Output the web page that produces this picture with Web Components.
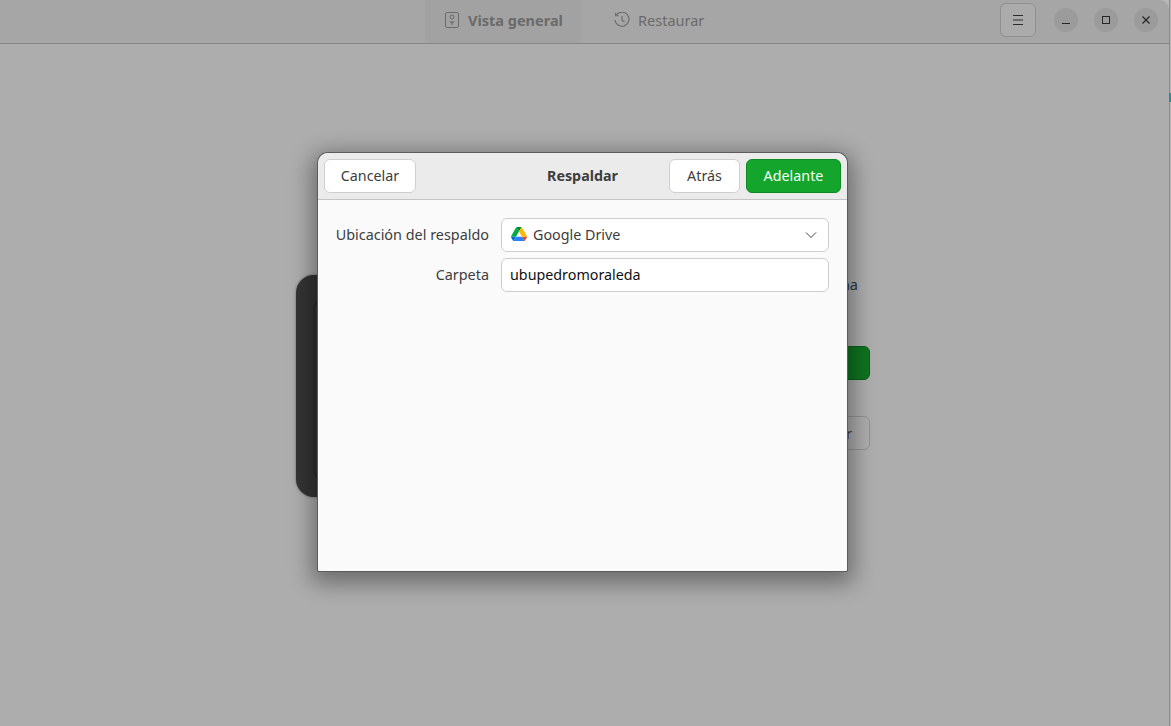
<!DOCTYPE html>
<html lang="es">
<head>
<meta charset="utf-8">
<title>Respaldar</title>
<style>
    html, body { margin: 0; height: 100%; overflow: hidden; background: #b8b8b8; }
    body { display: flex; font-family: "Noto Sans", "Open Sans", sans-serif; font-size: 14.3px; }
</style>
</head>
<body>
<app-window>
    <header-bar slot="header"></header-bar>
    <backup-overview slot="content"></backup-overview>
    <backup-dialog slot="dialog"></backup-dialog>
</app-window>
<desktop-edge></desktop-edge>

<script>
const ICONS = {
    overview: /*html*/`<svg width="16" height="16" viewBox="0 0 16 16" fill="none" stroke="currentColor" stroke-width="1"><rect x="1.5" y=".5" width="13" height="15" rx="1.5"/><circle cx="8" cy="5" r="2"/><path d="M8 8.5v4.5M5.5 9.5 8 11l2.5-1.5"/></svg>`,
    history: /*html*/`<svg width="16" height="16" viewBox="0 0 16 16" fill="none" stroke="currentColor" stroke-width="1.1"><path d="M2.2 3.2A7 7 0 1 1 1 8"/><path d="M1.6 .8v3h3"/><path d="M8 4v4.3l2.6 1.7"/></svg>`,
    menu: /*html*/`<svg width="16" height="16" viewBox="0 0 16 16" fill="none" stroke="currentColor" stroke-width="1"><path d="M3 3.5h10M3 8h10M3 12.5h10"/></svg>`,
    minimize: /*html*/`<svg width="16" height="16" viewBox="0 0 16 16" fill="none" stroke="currentColor" stroke-width="1"><path d="M4 11.5h8"/></svg>`,
    maximize: /*html*/`<svg width="16" height="16" viewBox="0 0 16 16" fill="none" stroke="currentColor" stroke-width="1"><rect x="4.5" y="4.5" width="7" height="7"/></svg>`,
    close: /*html*/`<svg width="16" height="16" viewBox="0 0 16 16" fill="none" stroke="currentColor" stroke-width="1.2"><path d="m4.5 4.5 7 7M11.5 4.5l-7 7"/></svg>`,
    chevron: /*html*/`<svg width="16" height="16" viewBox="0 0 16 16" fill="none" stroke="#3d3d3d" stroke-width="1"><path d="M3 6.5l5 5 5-5"/></svg>`,
    drive: /*html*/`<svg width="16" height="14.3" viewBox="0 0 87.3 78"><path d="m6.6 66.85 3.85 6.65c.8 1.4 1.95 2.5 3.3 3.3l13.75-23.8h-27.5c0 1.55.4 3.1 1.2 4.5z" fill="#0066da"/><path d="m43.65 25-13.75-23.8c-1.35.8-2.5 1.9-3.3 3.3l-25.4 44a9.06 9.06 0 0 0-1.2 4.5h27.5z" fill="#00ac47"/><path d="m73.55 76.8c1.35-.8 2.5-1.9 3.3-3.3l1.6-2.75 7.65-13.25c.8-1.4 1.2-2.95 1.2-4.5h-27.5l5.85 11.5z" fill="#ea4335"/><path d="m43.65 25 13.75-23.8c-1.35-.8-2.9-1.2-4.5-1.2h-18.5c-1.6 0-3.15.45-4.5 1.2z" fill="#00832d"/><path d="m59.8 53h-32.3l-13.75 23.8c1.35.8 2.9 1.2 4.5 1.2h50.8c1.6 0 3.15-.45 4.5-1.2z" fill="#2684fc"/><path d="m73.4 26.5-12.7-22c-.8-1.4-1.95-2.5-3.3-3.3l-13.75 23.8 16.15 28h27.45c0-1.55-.4-3.1-1.2-4.5z" fill="#ffba00"/></svg>`,
}

class AppWindow extends HTMLElement {
    constructor() {
        super()
        this.attachShadow({ mode: 'open' })
        this.shadowRoot.innerHTML = /*html*/`
            <style>
                :host {
                    display: flex;
                    flex-direction: column;
                    flex: none;
                    position: relative;
                    width: 1169px;
                    height: 726px;
                    background: #adadad;
                    border-radius: 0 10px 0 0;
                    overflow: hidden;
                    color: #2e2e2e;
                }
                .body { flex: 1; min-height: 0; display: flex; }
            </style>
            <slot name="header"></slot>
            <div class="body"><slot name="content"></slot></div>
            <slot name="dialog"></slot>
        `
    }
}

// the two pixels of desktop that show to the right of the window
class DesktopEdge extends HTMLElement {
    constructor() {
        super()
        this.attachShadow({ mode: 'open' })
        this.shadowRoot.innerHTML = /*html*/`
            <style>
                :host {
                    display: block;
                    flex: 1;
                    box-sizing: border-box;
                    border-left: 1px solid #8c8c8c;
                    padding-top: 93px;
                }
                .mark { height: 9px; margin-left: -1px; background: #1f8f9c; }
            </style>
            <div class="mark"></div>
        `
    }
}

class HeaderBar extends HTMLElement {
    constructor() {
        super()
        this.attachShadow({ mode: 'open' })
        this.shadowRoot.innerHTML = /*html*/`
            <style>
                :host {
                    display: flex;
                    height: 43px;
                    flex: none;
                    align-items: stretch;
                    background: #a6a6a6;
                    border-bottom: 1px solid #868686;
                }
                .tabs { display: flex; margin-left: 425px; }
                .tab {
                    display: flex;
                    align-items: center;
                    gap: 8px;
                    width: 157px;
                    box-sizing: border-box;
                    padding: 0 0 4px 19px;
                    color: #6a6a6a;
                    font-size: 14.5px;
                }
                .tab.active { background: #a2a2a2; font-weight: 700; }
                .tab.plain { padding-left: 32px; }
                .tools { margin-left: auto; display: flex; align-items: center; gap: 16px; padding: 0 11px 3px 0; }
                .menu {
                    width: 36px;
                    height: 34px;
                    box-sizing: border-box;
                    display: grid;
                    place-items: center;
                    background: #ababab;
                    border: 1px solid #8f8f8f;
                    border-radius: 6px;
                    margin-right: 2px;
                    color: #2b2b2b;
                }
                .ctl {
                    width: 24px;
                    height: 24px;
                    display: grid;
                    place-items: center;
                    background: #9b9b9b;
                    border-radius: 50%;
                    color: #262626;
                }
            </style>
            <div class="tabs">
                <div class="tab active">${ICONS.overview}<span>Vista general</span></div>
                <div class="tab plain">${ICONS.history}<span>Restaurar</span></div>
            </div>
            <div class="tools">
                <div class="menu">${ICONS.menu}</div>
                <div class="ctl">${ICONS.minimize}</div>
                <div class="ctl">${ICONS.maximize}</div>
                <div class="ctl">${ICONS.close}</div>
            </div>
        `
    }
}

class BackupOverview extends HTMLElement {
    constructor() {
        super()
        this.attachShadow({ mode: 'open' })
        this.shadowRoot.innerHTML = /*html*/`
            <style>
                :host {
                    display: flex;
                    flex: 1;
                    justify-content: center;
                    padding: 231px 3px 0 0;
                    align-items: flex-start;
                    gap: 40px;
                }
                .phone {
                    width: 200px;
                    height: 222px;
                    box-sizing: border-box;
                    background: #343434;
                    border-radius: 18px;
                    padding: 22px 0 20px 17px;
                    box-shadow: 0 0 3px #666;
                }
                .screen { height: 100%; border: 2px solid #2b2b2b; border-radius: 12px; }
                .side { width: 334px; display: flex; flex-direction: column; align-items: stretch; font-size: 14.5px; color: #26343f; }
                .text { height: 71px; padding-right: 12px; line-height: 18px; text-align: right; }
                .primary { height: 34px; box-sizing: border-box; border: 1px solid #0a5f16; border-radius: 6px; background: #0e7420; }
                .secondary {
                    height: 34px;
                    margin-top: 36px;
                    box-sizing: border-box;
                    border: 1px solid #929292;
                    border-radius: 6px;
                    text-align: right;
                    padding-right: 17px;
                    line-height: 32px;
                    color: #4a3a30;
                }
            </style>
            <div class="phone"><div class="screen"></div></div>
            <div class="side">
                <div class="text">na</div>
                <div class="primary"></div>
                <div class="secondary">r</div>
            </div>
        `
    }
}

class DialogButton extends HTMLElement {
    constructor() {
        super()
        this.attachShadow({ mode: 'open' })
        this.shadowRoot.innerHTML = /*html*/`
            <style>
                :host {
                    display: inline-flex;
                    align-items: center;
                    justify-content: center;
                    height: 34px;
                    box-sizing: border-box;
                    padding-bottom: 1px;
                    background: #fff;
                    border: 1px solid #cfcfcf;
                    border-radius: 6px;
                    color: #3d3d3d;
                    font-size: 14.3px;
                }
                :host([suggested]) {
                    background: #14a52c;
                    border-color: #0e8a22;
                    color: #f4fff5;
                }
            </style>
            <slot></slot>
        `
    }
}

class FormRow extends HTMLElement {
    constructor() {
        super()
        this.attachShadow({ mode: 'open' })
        this.shadowRoot.innerHTML = /*html*/`
            <style>
                :host { display: contents; }
                .label { text-align: right; color: #3d3d3d; align-self: center; padding-bottom: 2px; font-size: 14.4px; }
                .field {
                    display: flex;
                    align-items: center;
                    height: 34px;
                    box-sizing: border-box;
                    padding: 0 9px 2px 8px;
                    gap: 6px;
                    background: #fff;
                    border: 1px solid #cdcdcd;
                    border-radius: 6px;
                    color: #3d3d3d;
                    font-size: 14.3px;
                }
                ::slotted([slot="icon"]) { display: flex; margin-left: 1px; }
                ::slotted([slot="end"]) { display: flex; margin-left: auto; }
            </style>
            <div class="label"><slot name="label"></slot></div>
            <div class="field"><slot name="icon"></slot><slot></slot><slot name="end"></slot></div>
        `
    }
}

class BackupDialog extends HTMLElement {
    constructor() {
        super()
        this.attachShadow({ mode: 'open' })
        this.shadowRoot.innerHTML = /*html*/`
            <style>
                :host {
                    position: absolute;
                    left: 318px;
                    top: 153px;
                    width: 529px;
                    height: 418px;
                    display: flex;
                    flex-direction: column;
                    background: #fafafa;
                    border-radius: 10px 10px 1px 1px;
                    box-shadow: 0 0 0 1px #5c5c5c, 0 6px 22px 6px rgba(0, 0, 0, .38);
                    overflow: hidden;
                }
                .bar {
                    flex: none;
                    height: 46px;
                    display: grid;
                    grid-template-columns: 1fr auto 1fr;
                    align-items: center;
                    padding: 0 6px;
                    background: #ebebeb;
                    border-bottom: 1px solid #c4c4c4;
                }
                .start { display: flex; }
                .title { font-weight: 700; color: #3d3d3d; font-size: 14.3px; padding-bottom: 1px; }
                .end { display: flex; gap: 6px; justify-content: flex-end; }
                .cancel { width: 92px; }
                .back { width: 71px; }
                .next { width: 95px; }
                .form {
                    display: grid;
                    grid-template-columns: 171px 328px;
                    column-gap: 12px;
                    row-gap: 6px;
                    padding: 18px 18px 0 0;
                    justify-content: end;
                }
                .value { color: #111; }
            </style>
            <div class="bar">
                <div class="start"><dialog-button class="cancel">Cancelar</dialog-button></div>
                <div class="title">Respaldar</div>
                <div class="end">
                    <dialog-button class="back">Atrás</dialog-button>
                    <dialog-button class="next" suggested>Adelante</dialog-button>
                </div>
            </div>
            <div class="form">
                <form-row>
                    <span slot="label">Ubicación del respaldo</span>
                    <span slot="icon">${ICONS.drive}</span>
                    <span>Google Drive</span>
                    <span slot="end">${ICONS.chevron}</span>
                </form-row>
                <form-row>
                    <span slot="label">Carpeta</span>
                    <span class="value">ubupedromoraleda</span>
                </form-row>
            </div>
        `
    }
}

customElements.define('app-window', AppWindow)
customElements.define('desktop-edge', DesktopEdge)
customElements.define('header-bar', HeaderBar)
customElements.define('backup-overview', BackupOverview)
customElements.define('dialog-button', DialogButton)
customElements.define('form-row', FormRow)
customElements.define('backup-dialog', BackupDialog)
</script>
</body>
</html>
